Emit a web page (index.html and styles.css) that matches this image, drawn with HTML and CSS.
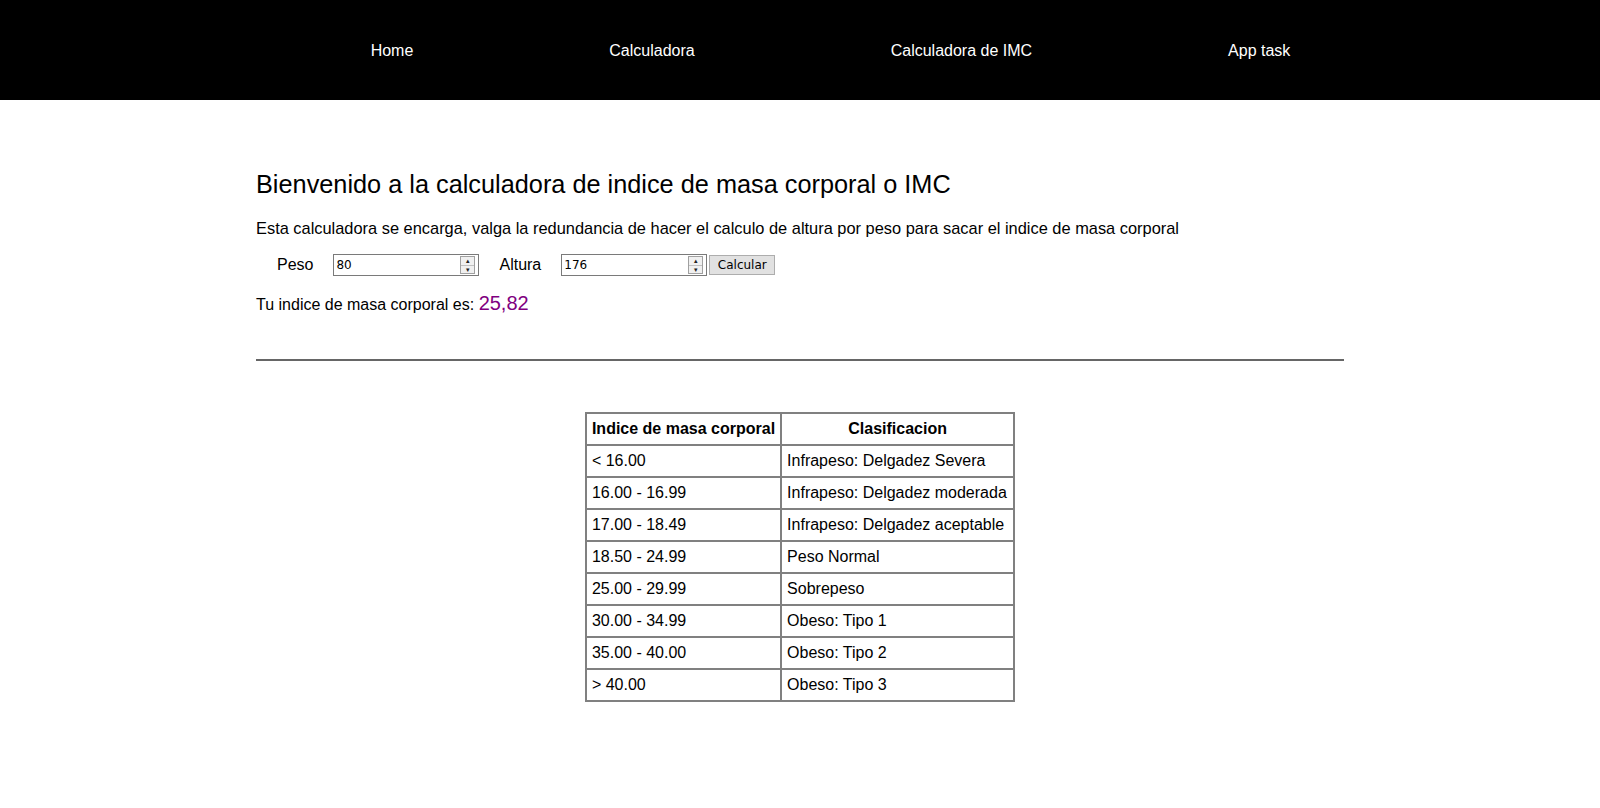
FILE: index.html
```html
<!DOCTYPE html>
<html lang="es">
<head>
<meta charset="utf-8">
<title>Calculadora de IMC</title>
<link rel="stylesheet" href="styles.css">
</head>
<body>
<nav class="topnav">
  <ul class="nav-list">
    <li><a href="#">Home</a></li>
    <li><a href="#">Calculadora</a></li>
    <li><a href="#">Calculadora de IMC</a></li>
    <li><a href="#">App task</a></li>
  </ul>
</nav>
<main class="content">
  <h1 class="title">Bienvenido a la calculadora de indice de masa corporal o IMC</h1>
  <p class="intro">Esta calculadora se encarga, valga la redundancia de hacer el calculo de altura por peso para sacar el indice de masa corporal</p>
  <form class="calc-form">
    <label class="field-label">Peso</label>
    <div class="num-box">
      <input class="num-input" type="text" value="80">
      <span class="spinner"><span class="spin-btn">&#9652;</span><span class="spin-btn">&#9662;</span></span>
    </div>
    <label class="field-label">Altura</label>
    <div class="num-box">
      <input class="num-input" type="text" value="176">
      <span class="spinner"><span class="spin-btn">&#9652;</span><span class="spin-btn">&#9662;</span></span>
    </div>
    <button type="button" class="calc-btn">Calcular</button>
  </form>
  <p class="result">Tu indice de masa corporal es: <span class="result-value">25,82</span></p>
  <hr class="divider">
  <table class="imc-table">
    <thead>
      <tr><th>Indice de masa corporal</th><th class="center">Clasificacion</th></tr>
    </thead>
    <tbody>
      <tr><td>&lt; 16.00</td><td>Infrapeso: Delgadez Severa</td></tr>
      <tr><td>16.00 - 16.99</td><td>Infrapeso: Delgadez moderada</td></tr>
      <tr><td>17.00 - 18.49</td><td>Infrapeso: Delgadez aceptable</td></tr>
      <tr><td>18.50 - 24.99</td><td>Peso Normal</td></tr>
      <tr><td>25.00 - 29.99</td><td>Sobrepeso</td></tr>
      <tr><td>30.00 - 34.99</td><td>Obeso: Tipo 1</td></tr>
      <tr><td>35.00 - 40.00</td><td>Obeso: Tipo 2</td></tr>
      <tr><td>&gt; 40.00</td><td>Obeso: Tipo 3</td></tr>
    </tbody>
  </table>
</main>
</body>
</html>
```
FILE: styles.css
```css
html, body {
  margin: 0;
  padding: 0;
  background: #fff;
}
body {
  font-family: "Liberation Sans", Arial, sans-serif;
  color: #000;
}
.topnav {
  background: #000;
  height: 100px;
  display: flex;
  align-items: center;
}
.nav-list {
  list-style: none;
  margin: 0;
  padding: 2px 0 0 61px;
  width: 100%;
  display: flex;
  justify-content: center;
  gap: 196px;
}
.nav-list a {
  color: #fff;
  text-decoration: none;
  font-size: 16px;
}
.content {
  width: 1088px;
  margin: 0 auto;
  padding-top: 70px;
}
.title {
  font-size: 25.3px;
  font-weight: normal;
  margin: 0 0 20px 0;
}
.intro {
  font-size: 16.4px;
  margin: 0 0 16px 0;
}
.calc-form {
  display: flex;
  align-items: center;
  padding-left: 21px;
  margin: 0;
}
.field-label {
  font-size: 16px;
  margin-right: 20px;
}
.num-box {
  display: flex;
  align-items: center;
  width: 144px;
  height: 20px;
  border: 1px solid #7a7a7a;
  background: #fff;
  margin-right: 20px;
}
.num-box:nth-of-type(2) {
  margin-right: 2px;
}
.num-input {
  flex: 1;
  min-width: 0;
  border: 0;
  outline: none;
  padding: 0 0 0 2px;
  font-family: "DejaVu Sans", sans-serif;
  font-size: 12px;
  height: 18px;
  background: transparent;
  color: #000;
}
.spinner {
  display: flex;
  flex-direction: column;
  width: 13px;
  height: 16px;
  margin-right: 3px;
  border: 1px solid #a0a0a0;
  background: #f0f0f0;
}
.spin-btn {
  flex: 1;
  font-size: 7px;
  line-height: 8px;
  text-align: center;
  color: #222;
}
.spin-btn + .spin-btn {
  border-top: 1px solid #c0c0c0;
}
.calc-btn {
  width: 66px;
  height: 20px;
  padding: 0;
  border: 1px solid #adadad;
  background: #e1e1e1;
  font-family: "DejaVu Sans", sans-serif;
  font-size: 12px;
  color: #000;
}
.result {
  font-size: 16px;
  margin: 16px 0 0 0;
}
.result-value {
  font-size: 20px;
  color: #800080;
}
.divider {
  margin: 44px 0 0 0;
  border: 0;
  border-top: 2px solid #666;
  height: 0;
}
.imc-table {
  margin: 51px auto 0;
  border-collapse: separate;
  border-spacing: 0;
  border: 1px solid #808080;
  font-size: 16px;
}
.imc-table th,
.imc-table td {
  border: 1px solid #808080;
  padding: 6px 5px;
  text-align: left;
  height: 18px;
  white-space: nowrap;
}
.imc-table th {
  font-weight: bold;
}
.imc-table th.center {
  text-align: center;
}
.imc-table td:first-child,
.imc-table th:first-child {
  width: 182px;
}
.imc-table td:last-child,
.imc-table th:last-child {
  width: 221px;
}
```
